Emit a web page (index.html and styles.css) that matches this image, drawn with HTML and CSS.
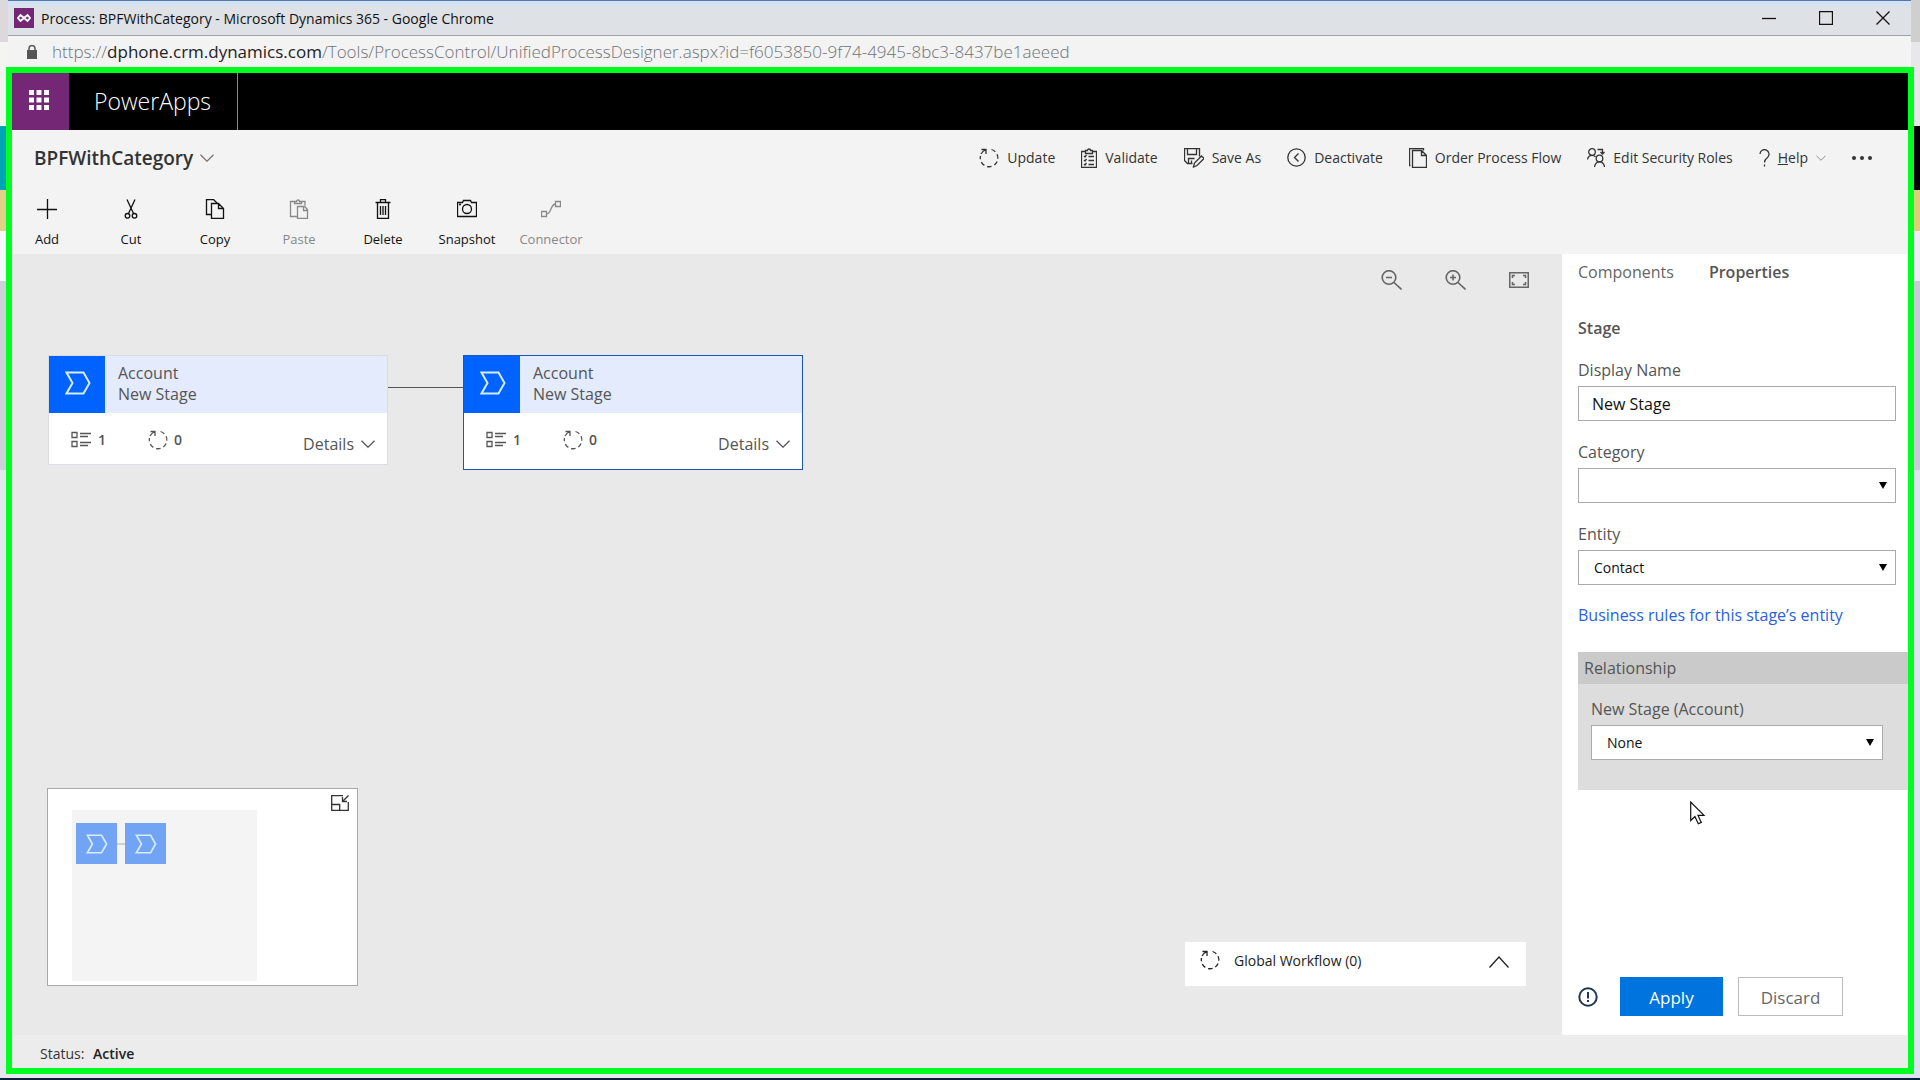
FILE: index.html
```html
<!DOCTYPE html>
<html lang="en">
<head>
    <meta charset="UTF-8">
    <meta name="viewport" content="width=device-width, initial-scale=1.0">
    <title>Process: BPFWithCategory - Microsoft Dynamics 365</title>
    <link rel="stylesheet" href="styles.css">
</head>
<body>
    <!-- shared shapes -->
    <svg class="defs" width="0" height="0">
        <symbol id="i-loop" viewBox="0 0 20 20">
            <path d="M12.500 1.500A8.800 8.800 0 1 1 1.500 8" stroke-dasharray="4.500 3"/>
            <path d="M2.500 1.500H7v4.500M7 1.500C4.500 2.500 3 4 2 6"/>
        </symbol>
        <symbol id="i-stage" viewBox="0 0 26 24">
            <path d="M1.500 1.500h17l6 10.500-6 10.500h-17L7.500 12z"/>
        </symbol>
        <symbol id="i-down" viewBox="0 0 14 8">
            <path d="M.5.7L7 7.200 13.500.7"/>
        </symbol>
        <symbol id="i-fields" viewBox="0 0 21 17">
            <path d="M1 1.500h5v5H1zM1 10.500h5v5H1zM9 2.500h11M9 5.500h8M9 11.500h11M9 14.500h8"/>
        </symbol>
    </svg>

    <div class="title-bar">
        <svg class="favicon" width="20" height="20" viewBox="0 0 20 20">
            <rect width="20" height="20" fill="#742774"/>
            <path d="M6.500 7L10 10l3.500-3 2.500 3-2.500 3L10 10l-3.500 3L4 10z" fill="none" stroke="#fff" stroke-width="1.800"/>
        </svg>
        <span class="window-title">Process: BPFWithCategory - Microsoft Dynamics 365 - Google Chrome</span>
        <div class="window-buttons">
            <button type="button" aria-label="Minimize"><svg width="14" height="14"><path d="M0 7.500h14"/></svg></button>
            <button type="button" aria-label="Maximize"><svg width="14" height="14"><path d="M.5.5h13v13H.5z"/></svg></button>
            <button type="button" aria-label="Close"><svg width="14" height="14"><path d="M.5.5l13 13M13.500.5l-13 13"/></svg></button>
        </div>
    </div>
    <div class="url-bar">
        <svg width="10" height="14" viewBox="0 0 10 14">
            <rect y="5" width="10" height="9" fill="#555"/>
            <path d="M2 6V3.500a3 3 0 0 1 6 0V6" fill="none" stroke="#555" stroke-width="1.500"/>
        </svg>
        <span>https://<b>dphone.crm.dynamics.com</b>/Tools/ProcessControl/UnifiedProcessDesigner.aspx?id=f6053850-9f74-4945-8bc3-8437be1aeeed</span>
    </div>

    <div class="app">
        <header class="nav">
            <button type="button" class="waffle" aria-label="Apps">
                <svg width="20" height="20" fill="#fff">
                    <path d="M0 0h5v5H0zM7.500 0h5v5h-5zM15 0h5v5h-5zM0 7.500h5v5H0zM7.500 7.500h5v5h-5zM15 7.500h5v5h-5zM0 15h5v5H0zM7.500 15h5v5h-5zM15 15h5v5h-5z"/>
                </svg>
            </button>
            <span class="brand">PowerApps</span>
        </header>

        <div class="header">
            <div class="header-row">
                <button type="button" class="process-name">BPFWithCategory <svg class="icon" width="14" height="8"><use href="#i-down"/></svg></button>
                <div class="commands">
                    <button type="button"><svg class="icon" width="20" height="20"><use href="#i-loop"/></svg>Update</button>
                    <button type="button">
                        <svg class="icon" width="16" height="20">
                            <path d="M4.500 3.500h-4v16h15v-16h-4M4.500 2.500h2a1.500 1.500 0 0 1 3 0h2v3h-7zM7.500 8.500H13M7.500 12.500H13M7.500 16.500H13M3 8l1 1 1.500-2M3 12l1 1 1.500-2M3 16l1 1 1.500-2"/>
                        </svg>Validate</button>
                    <button type="button">
                        <svg class="icon" width="20" height="20">
                            <path d="M8.500 15.500h-5l-3-3V.5h15v8M3.500.5v6h9v-6M4.500 15.500v-5h6M9.500 19l1-4 7-7 2.500 2.500-7 7zM7.500 12.500v3"/>
                        </svg>Save As</button>
                    <button type="button">
                        <svg class="icon" width="19" height="20">
                            <circle cx="9.500" cy="9.500" r="8.700"/><path d="M11.500 5.500l-4 4 4 4"/>
                        </svg>Deactivate</button>
                    <button type="button">
                        <svg class="icon" width="18" height="20">
                            <path d="M3.500 2.500h9l5 5v12h-14zM12.500 2.500v5h5M1.500 17.500h-1v-17h14v2"/>
                        </svg>Order Process Flow</button>
                    <button type="button">
                        <svg class="icon" width="18" height="20">
                            <circle cx="5" cy="4" r="3.300"/><circle cx="12.500" cy="10.500" r="3.300"/>
                            <path d="M.5 11.500c.5-3 2-4.200 4.500-4.200 1.500 0 2.500.5 3.500 1.500M7.500 19c.5-3.500 2-5.200 5-5.200s4.500 1.700 5 5.200M10.500 1.500h5v4M13.500 4l2 2 2-2"/>
                        </svg>Edit Security Roles</button>
                    <button type="button" class="help">
                        <svg class="icon" width="11" height="18">
                            <path d="M1 5a4.500 4.500 0 1 1 7.500 3.500C6.500 10 5.500 11 5.500 13.500M5.500 15.500v2"/>
                        </svg><u>H</u>elp<svg class="icon small-arrow" width="10" height="6"><use href="#i-down"/></svg></button>
                    <button type="button" aria-label="More"><svg width="20" height="4" fill="#333"><circle cx="2" cy="2" r="2"/><circle cx="10" cy="2" r="2"/><circle cx="18" cy="2" r="2"/></svg></button>
                </div>
            </div>
            <div class="tools">
                <button type="button"><svg class="icon" width="20" height="20"><path d="M10.500 0v20M0 10.500h20"/></svg>Add</button>
                <button type="button">
                    <svg class="icon" width="20" height="20">
                        <path d="M6 .5l6.500 14M14 .5l-6.500 14"/><circle cx="6.500" cy="16.800" r="2.300"/><circle cx="13.500" cy="16.800" r="2.300"/>
                    </svg>Cut</button>
                <button type="button">
                    <svg class="icon" width="20" height="20">
                        <path d="M6.500 4.500h7l5 5v10h-12zM13.500 4.500v5h5M6.500 15.500h-5V.5h7l4 4"/>
                    </svg>Copy</button>
                <button type="button" disabled>
                    <svg class="icon" width="20" height="20">
                        <path d="M6 2.500H1.500v15H8M12.500 2.500H16v4M5.500 4.500v-2h2a1.500 1.500 0 0 1 3 0h2v2zM8.500 7.500h7l3 3v9h-10zM14.500 7.500v4h4"/>
                    </svg>Paste</button>
                <button type="button">
                    <svg class="icon" width="20" height="20">
                        <path d="M2.500 3.500h15M7.500 3V.7h5V3M4.500 3.500v16h11v-16M7.500 7v9M10 7v9M12.500 7v9"/>
                    </svg>Delete</button>
                <button type="button">
                    <svg class="icon" width="20" height="20">
                        <path d="M.5 3.500h5l1-2h7l1 2h5v14H.5z"/><circle cx="10" cy="10" r="4.500"/><path d="M2 5.500h2"/>
                    </svg>Snapshot</button>
                <button type="button" disabled>
                    <svg class="icon" width="20" height="20">
                        <path d="M.5 12.500h5v5h-5zM14.500 2.500h5v5h-5zM5.500 15c5 0 4-10 9-10"/>
                    </svg>Connector</button>
            </div>
        </div>

        <main class="designer">
            <section class="canvas">
                <div class="zoom-tools">
                    <button type="button" aria-label="Zoom out"><svg class="icon" width="21" height="20"><circle cx="8" cy="7.500" r="6.800"/><path d="M5 7.500h6M13 12.500l7.500 7"/></svg></button>
                    <button type="button" aria-label="Zoom in"><svg class="icon" width="21" height="20"><circle cx="8" cy="7.500" r="6.800"/><path d="M5 7.500h6M8 4.500v6M13 12.500l7.500 7"/></svg></button>
                    <button type="button" aria-label="Fit to canvas"><svg class="icon" width="20" height="16"><path d="M.7.7h18.600v14.600H.7zM3.500 6V3.500H6M14 3.500h2.500V6M16.500 10v2.500H14M6 12.500H3.500V10"/></svg></button>
                </div>

                <div class="flow">
                    <article class="stage">
                        <div class="stage-head">
                            <div class="stage-icon"><svg width="26" height="24"><use href="#i-stage"/></svg></div>
                            <div class="stage-name">Account<br>New Stage</div>
                        </div>
                        <div class="stage-foot">
                            <span class="count fields"><svg class="icon" width="21" height="17"><use href="#i-fields"/></svg>1</span>
                            <span class="count"><svg class="icon" width="20" height="20"><use href="#i-loop"/></svg>0</span>
                            <button type="button" class="details">Details <svg class="icon" width="14" height="8"><use href="#i-down"/></svg></button>
                        </div>
                    </article>
                    <div class="connector"></div>
                    <article class="stage selected">
                        <div class="stage-head">
                            <div class="stage-icon"><svg width="26" height="24"><use href="#i-stage"/></svg></div>
                            <div class="stage-name">Account<br>New Stage</div>
                        </div>
                        <div class="stage-foot">
                            <span class="count fields"><svg class="icon" width="21" height="17"><use href="#i-fields"/></svg>1</span>
                            <span class="count"><svg class="icon" width="20" height="20"><use href="#i-loop"/></svg>0</span>
                            <button type="button" class="details">Details <svg class="icon" width="14" height="8"><use href="#i-down"/></svg></button>
                        </div>
                    </article>
                </div>

                <div class="canvas-bottom">
                    <div class="minimap">
                        <div class="minimap-view">
                            <div class="tile"><svg width="22" height="20"><use href="#i-stage"/></svg></div>
                            <div class="tile-line"></div>
                            <div class="tile"><svg width="22" height="20"><use href="#i-stage"/></svg></div>
                        </div>
                        <button type="button" aria-label="Collapse map">
                            <svg class="icon" width="18" height="16"><path d="M12 .7H.7v14.600h16.600V7M.7 9.500h8v6M17.500.5l-6 6M11.500 2v4.500H16"/></svg>
                        </button>
                    </div>
                    <button type="button" class="global-workflow">
                        <svg class="icon" width="20" height="20"><use href="#i-loop"/></svg>
                        <span>Global Workflow (0)</span>
                        <svg class="icon" width="20" height="12"><path d="M.5 11.500L10 1l9.500 10.500"/></svg>
                    </button>
                </div>
            </section>

            <aside class="panel">
                <nav class="tabs">
                    <a href="#components">Components</a>
                    <a href="#properties" class="active">Properties</a>
                </nav>
                <form class="properties">
                    <h2>Stage</h2>
                    <div class="field">
                        <label for="display-name">Display Name</label>
                        <input type="text" id="display-name" value="New Stage">
                    </div>
                    <div class="field">
                        <label for="category">Category</label>
                        <div class="select"><select id="category"><option></option></select></div>
                    </div>
                    <div class="field">
                        <label for="entity">Entity</label>
                        <div class="select"><select id="entity"><option>Contact</option></select></div>
                    </div>
                    <a href="#rules" class="rules-link">Business rules for this stage’s entity</a>
                    <div class="relationship">
                        <h3>Relationship</h3>
                        <div class="relationship-body">
                            <label for="relationship">New Stage (Account)</label>
                            <div class="select"><select id="relationship"><option>None</option></select></div>
                        </div>
                    </div>
                    <div class="actions">
                        <svg class="info" width="20" height="20"><circle cx="10" cy="10" r="8.700"/><path d="M10 5v6.500M10 13v2"/></svg>
                        <button type="submit" class="apply">Apply</button>
                        <button type="reset" class="discard">Discard</button>
                    </div>
                </form>
                <svg class="cursor" width="16" height="24" viewBox="0 0 16 24">
                    <path d="M.7 1v18.500l4.200-4 3.400 7.300 3-1.400-3.300-7H14z"/>
                </svg>
            </aside>
        </main>

        <footer class="status">Status: <strong>Active</strong></footer>
    </div>
</body>
</html>
```
FILE: styles.css
```css
* {
    box-sizing: border-box;
}

body {
    margin: 0;
    height: 100vh;
    display: flex;
    flex-direction: column;
    padding-bottom: 4px;
    border-bottom: 2px solid #0a2038;
    font-family: "Open Sans", "Noto Sans", sans-serif;
    font-size: 16px;
    color: #555;
    /* window behind the popup, visible as thin strips on both sides */
    background:
        linear-gradient(#dcd8dc 42px, #f4f4f2 42px, #f4f4f2 126px, #00a4b4 126px, #00a4b4 190px, #e2d08a 190px, #e2d08a 231px, #f6f8fc 231px, #f6f8fc 281px, #ccd0d8 281px, #ccd0d8 470px, #e6e6ee 470px) left / 50% 100% no-repeat,
        linear-gradient(#cfcfcf 42px, #e8e8ea 42px, #e8e8ea 126px, #000 126px, #000 190px, #dccf78 190px, #dccf78 231px, #eceef6 231px, #eceef6 281px, #c8cad6 281px, #c8cad6 470px, #dde2f0 470px) right / 50% 100% no-repeat;
}

button {
    padding: 0;
    border: 0;
    background: none;
    font-family: inherit;
    color: inherit;
    cursor: pointer;
}

svg {
    display: block;
    flex: none;
}

.defs {
    position: absolute;
}

.icon {
    fill: none;
    stroke: currentColor;
    stroke-width: 1.3;
}

/* browser window */
.title-bar {
    display: flex;
    align-items: center;
    height: 36px;
    margin: 0 9px 0 8px;
    padding-left: 6px;
    border-top: 1px solid #5578a5;
    border-bottom: 1px solid #a0a2a5;
    background: linear-gradient(#d3e2f5 5px, #dee1e5 5px);
    color: #111;
}

.window-title {
    flex: 1;
    padding-left: 7px;
    font-size: 14px;
}

.window-buttons {
    display: flex;
}

.window-buttons button {
    display: flex;
    justify-content: center;
    width: 57px;
}

.window-buttons svg {
    fill: none;
    stroke: #111;
    stroke-width: 1.3;
}

.url-bar {
    display: flex;
    align-items: center;
    gap: 15px;
    height: 31px;
    margin: 0 9px 0 8px;
    padding-left: 19px;
    background: #f3f3f3;
    font-size: 17px;
    font-weight: 300;
    color: #6f7276;
}

.url-bar b {
    font-weight: normal;
    color: #222;
}

/* app */
.app {
    flex: 1;
    display: flex;
    flex-direction: column;
    min-height: 0;
    margin: 0 6px;
    border: 6px solid #00ff21;
    background: #ececec;
}

.nav {
    display: flex;
    height: 57px;
    background: #000;
}

.waffle {
    display: flex;
    align-items: center;
    justify-content: center;
    width: 57px;
    padding: 0 3px 3px 0;
    background: #742774;
}

.brand {
    padding: 0 26px 0 25px;
    border-right: 1px solid #888;
    font-size: 23px;
    font-weight: 300;
    line-height: 56px;
    color: #fff;
}

.header {
    height: 124px;
    background: #f3f3f3;
    color: #333;
}

.header-row {
    display: flex;
    justify-content: space-between;
    align-items: center;
    height: 56px;
    padding: 0 36px 0 22px;
}

.process-name {
    display: flex;
    align-items: center;
    gap: 7px;
    font-size: 19px;
    font-weight: 600;
}

.process-name .icon {
    color: #777;
}

.commands {
    display: flex;
    align-items: center;
    gap: 26px;
}

.commands button {
    display: flex;
    align-items: center;
    font-size: 14px;
    line-height: 20px;
}

.commands .icon {
    margin-right: 8px;
}

.commands .small-arrow {
    margin: 0 0 0 8px;
    color: #888;
}

.tools {
    display: flex;
    gap: 16px;
    padding: 13px 1px 0;
}

.tools button {
    display: flex;
    flex-direction: column;
    align-items: center;
    gap: 10px;
    width: 68px;
    font-size: 13px;
    line-height: 20px;
    color: #111;
}

.tools button:disabled {
    color: #888;
}

.designer {
    flex: 1;
    display: flex;
    min-height: 0;
}

/* canvas */
.canvas {
    flex: 1;
    display: flex;
    flex-direction: column;
    padding: 16px 0 49px;
    background: #e9e9e9;
}

.zoom-tools {
    display: flex;
    justify-content: flex-end;
    align-items: center;
    gap: 43px;
    padding-right: 33px;
    color: #666;
}

.zoom-tools .icon {
    stroke-width: 1.6;
}

.flow {
    display: flex;
    align-items: flex-start;
    padding: 65px 36px 0;
}

.stage {
    width: 340px;
    border: 1px solid #dcdce4;
    background: #fff;
}

.stage.selected {
    padding-bottom: 5px;
    border-color: #1c57b8;
}

.stage-head {
    display: flex;
    background: #e3ebfc;
}

.stage-icon {
    display: flex;
    align-items: center;
    justify-content: center;
    width: 56px;
    height: 57px;
    padding: 0 0 3px 1px;
    background: #0062ff;
}

.stage-icon svg,
.tile svg {
    fill: none;
    stroke: #d6ecff;
    stroke-width: 2;
}

.stage-name {
    padding: 7px 13px;
    line-height: 21px;
}

.stage-foot {
    display: flex;
    align-items: center;
    height: 51px;
    padding: 2px 12px 0 22px;
}

.count {
    display: flex;
    align-items: center;
    gap: 6px;
    height: 32px;
    font-size: 14px;
    font-weight: 600;
}

.count.fields {
    width: 77px;
}

.details {
    display: flex;
    align-items: center;
    gap: 7px;
    margin: 8px 0 0 auto;
    font-size: 16px;
}

.connector {
    width: 75px;
    height: 1px;
    margin-top: 32px;
    background: #555;
}

.canvas-bottom {
    display: flex;
    justify-content: space-between;
    align-items: flex-end;
    margin-top: auto;
    padding: 0 36px 0 35px;
}

.minimap {
    display: flex;
    justify-content: space-between;
    align-items: flex-start;
    width: 311px;
    height: 198px;
    padding: 6px 8px 6px 24px;
    border: 1px solid #a8a8a8;
    background: #fff;
    color: #333;
}

.minimap-view {
    display: flex;
    align-items: flex-start;
    width: 185px;
    height: 171px;
    margin-top: 15px;
    padding: 13px 4px;
    background: #f4f4f4;
}

.tile {
    display: flex;
    align-items: center;
    justify-content: center;
    width: 41px;
    height: 41px;
    background: #72a4f5;
}

.tile-line {
    width: 8px;
    height: 2px;
    margin-top: 20px;
    background: #d0d0d0;
}

.global-workflow {
    display: flex;
    align-items: flex-start;
    gap: 14px;
    width: 341px;
    height: 44px;
    padding: 8px 17px 0 15px;
    background: #fff;
    color: #222;
    font-size: 14px;
    line-height: 22px;
}

.global-workflow span {
    flex: 1;
    text-align: left;
}

.global-workflow .icon:last-child {
    margin-top: 6px;
}

/* properties panel */
.panel {
    position: relative;
    display: flex;
    flex-direction: column;
    width: 346px;
    padding: 7px 0 19px 16px;
    background: #fff;
}

.tabs {
    display: flex;
    gap: 35px;
    line-height: 22px;
}

.tabs a {
    color: #666;
    text-decoration: none;
}

.tabs .active {
    font-weight: 600;
    color: #555;
}

.properties {
    flex: 1;
    display: flex;
    flex-direction: column;
}

.properties h2 {
    margin: 34px 0 20px;
    font-size: 16px;
    font-weight: 600;
    line-height: 22px;
}

.field {
    margin: 0 12px 20px 0;
}

.properties label {
    display: block;
    margin-bottom: 5px;
    line-height: 22px;
}

.properties input,
.properties select {
    display: block;
    width: 100%;
    height: 35px;
    border: 1px solid #aaa;
    border-radius: 0;
    background: #fff;
    font-family: inherit;
    color: #111;
}

.properties input {
    padding: 1px 13px 0;
    font-size: 16px;
}

.properties select {
    padding: 0 15px;
    font-size: 14px;
    appearance: none;
}

.select {
    position: relative;
}

.select::after {
    content: "";
    position: absolute;
    top: 14px;
    right: 9px;
    border: 4px solid transparent;
    border-top: 7px solid #000;
    border-bottom: 0;
    pointer-events: none;
}

.rules-link {
    line-height: 20px;
    color: #2a5fe0;
    text-decoration: none;
}

.relationship {
    height: 138px;
    margin-top: 27px;
    background: #ddd;
}

.relationship h3 {
    margin: 0;
    padding: 0 6px;
    background: #cacaca;
    font-size: 16px;
    font-weight: normal;
    line-height: 32px;
}

.relationship-body {
    padding: 14px 25px 0 13px;
}

.actions {
    display: flex;
    align-items: center;
    margin-top: auto;
}

.info {
    margin-right: 22px;
    fill: none;
    stroke: #1f3850;
    stroke-width: 2;
}

.actions button {
    height: 39px;
    padding-top: 2px;
    font-size: 17px;
}

.actions .apply {
    width: 103px;
    margin-right: 15px;
    background: #0074de;
    color: #fff;
}

.actions .discard {
    width: 105px;
    border: 1px solid #bbb;
    color: #666;
}

.cursor {
    position: absolute;
    left: 128px;
    top: 547px;
    fill: #fff;
    stroke: #111;
    stroke-width: 1.2;
}

.status {
    height: 33px;
    padding-left: 28px;
    font-size: 14px;
    line-height: 37px;
    color: #333;
}

.status strong {
    margin-left: 5px;
    font-weight: 600;
    color: #222;
}
```
